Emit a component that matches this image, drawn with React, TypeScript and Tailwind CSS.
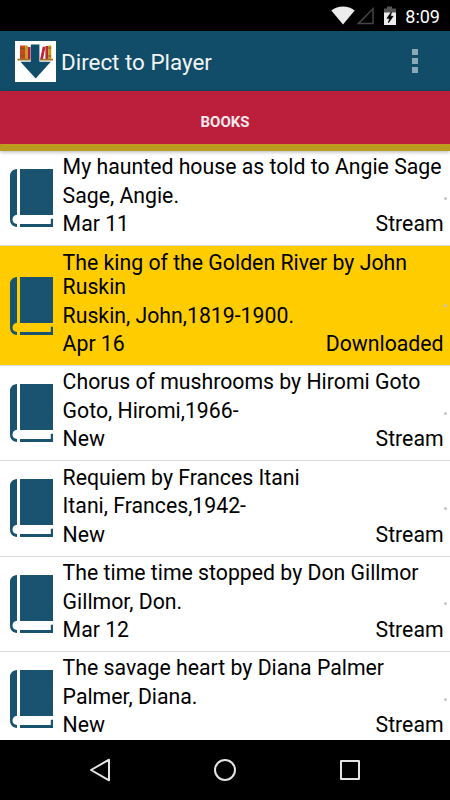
import React from 'react';

interface Book {
    title: string;
    author: string;
    date: string;
    status: 'Stream' | 'Downloaded';
}

const books: Book[] = [
    { title: 'My haunted house as told to Angie Sage', author: 'Sage, Angie.', date: 'Mar 11', status: 'Stream' },
    { title: 'The king of the Golden River by John Ruskin', author: 'Ruskin, John,1819-1900.', date: 'Apr 16', status: 'Downloaded' },
    { title: 'Chorus of mushrooms by Hiromi Goto', author: 'Goto, Hiromi,1966-', date: 'New', status: 'Stream' },
    { title: 'Requiem by Frances Itani', author: 'Itani, Frances,1942-', date: 'New', status: 'Stream' },
    { title: 'The time time stopped by Don Gillmor', author: 'Gillmor, Don.', date: 'Mar 12', status: 'Stream' },
    { title: 'The savage heart by Diana Palmer', author: 'Palmer, Diana.', date: 'New', status: 'Stream' },
];

const StatusBar = () => (
    <div className="flex h-[31px] shrink-0 items-center justify-end bg-black pr-[10px] text-white">
        <svg width="70" height="20" viewBox="0 0 70 20" className="mr-[4px]">
            <path d="M0.3 4.6C7 -0.9 17 -0.9 23.7 4.6L12 18.5Z" fill="#ececec" />
            <path d="M42 2.8V17.6H27.4Z" fill="none" stroke="#444" strokeWidth="1.5" />
            <path d="M56 0.5h5v2h4v5H53v-5h3Z" fill="#555" />
            <path d="M53 6.5h12V19H53Z" fill="#ececec" />
            <path d="M60.4 6l-4.4 6.3h2.5l-1 4.4 4.6-6.4h-2.6Z" fill="#000" stroke="#000" strokeWidth="0.7" />
        </svg>
        <span className="pt-[2px] text-[18px] leading-none">8:09</span>
    </div>
);

const Logo = () => (
    <svg width="41" height="41" viewBox="0 0 41 41">
        <rect width="41" height="41" fill="#fff" />
        <path d="M5 4.5h5v13.5H5Z" fill="#c84a1c" />
        <path d="M10 4.5h2.8V18H10Z" fill="#c39b20" />
        <path d="M12.8 6h2.7v12h-2.7Z" fill="#b81f3a" />
        <path d="M27.8 5.5l2.6.5-2.4 12h-2.8Z" fill="#c0203a" />
        <path d="M30.4 5h2.8v13h-2.8Z" fill="#b5302c" />
        <path d="M33.2 4.5h3V18h-3Z" fill="#c39b20" />
        <path d="M5 7.5h5M5 15h5M33.2 7h3M33.2 15h3" stroke="#8b4a22" strokeWidth="1" />
        <path d="M2.5 18.6h13M25 18.6h13" stroke="#a3732b" strokeWidth="1.6" />
        <path d="M15.8 3.5h8.6v17.3h11.4L20.7 37.5 5.4 20.8h10.4Z" fill="#114d68" />
    </svg>
);

const BookIcon = () => (
    <svg width="43" height="58" viewBox="0 0 43 58" fill="#195370">
        <path d="M7 0v45.8C4.2 46.2 2.5 48 2.5 50.5c0 2.6 1.8 4.3 4.5 4.6V58C2.8 57.7 0 55 0 50.5V7C0 3 2.6 0.4 7 0Z" />
        <path d="M10 0h33v46H10Z" />
        <path d="M10 55h30.8v-5.3H43V58H10Z" />
    </svg>
);

const BookRow: React.FC<{ book: Book }> = ({ book }) => (
    <div
        className={`flex shrink-0 items-center border-b border-[#dcdcdc] pl-[10px] ${
            book.status === 'Downloaded' ? 'bg-[#ffcc00]' : 'bg-white'
        }`}
    >
        <BookIcon />
        <div className="ml-[9.6px] w-[381px] shrink-0 pt-[4.4px] pb-[8.4px] text-[21.25px] leading-[24.5px] text-black">
            <p className="-mr-1">{book.title}</p>
            <p className="mt-[4px]">{book.author}</p>
            <div className="mt-[4px] flex justify-between">
                <span>{book.date}</span>
                <span>{book.status}</span>
            </div>
        </div>
        <span className="ml-[0.4px] size-[3px] shrink-0 rounded-full bg-[#c4c4c4]" />
    </div>
);

const NavBar = () => (
    <div className="flex h-[60px] shrink-0 items-center justify-between bg-black px-[88px]">
        <svg width="24" height="26" viewBox="0 0 24 26" fill="none" stroke="#e4e4e4" strokeWidth="2" strokeLinejoin="round">
            <path d="M21 2.7V23.3L3 13Z" />
        </svg>
        <svg width="24" height="24" viewBox="0 0 24 24" fill="none" stroke="#e4e4e4" strokeWidth="2">
            <circle cx="12" cy="12" r="10" />
        </svg>
        <svg width="24" height="24" viewBox="0 0 24 24" fill="none" stroke="#e4e4e4" strokeWidth="2" strokeLinejoin="round">
            <path d="M3 3h18v18H3Z" />
        </svg>
    </div>
);

export default function App() {
    return (
        <div className="flex h-[800px] w-[450px] flex-col overflow-hidden bg-white font-['Roboto',sans-serif]">
            <StatusBar />
            <header className="flex h-[60px] shrink-0 items-center bg-[#114d68] pr-[32px] pl-[15px]">
                <Logo />
                <h1 className="ml-[5px] flex-1 pt-[3px] text-[22.4px] text-[#f1f5f7]">Direct to Player</h1>
                <div className="flex flex-col gap-[3px]">
                    <span className="size-[6px] bg-[#8aa8b5]" />
                    <span className="size-[6px] bg-[#8aa8b5]" />
                    <span className="size-[6px] bg-[#8aa8b5]" />
                </div>
            </header>
            <div className="z-10 flex h-[60px] shrink-0 items-center justify-center border-b-[7px] border-[#bc9c20] bg-[#bc1f3c] pt-[10px] text-[15px] font-bold text-[#f8e9ec] shadow-[0_1px_4px_rgba(0,0,0,0.3)]">
                BOOKS
            </div>
            <main className="flex min-h-0 flex-1 flex-col overflow-hidden">
                {books.map((book) => (
                    <BookRow key={book.title} book={book} />
                ))}
            </main>
            <NavBar />
        </div>
    );
}
